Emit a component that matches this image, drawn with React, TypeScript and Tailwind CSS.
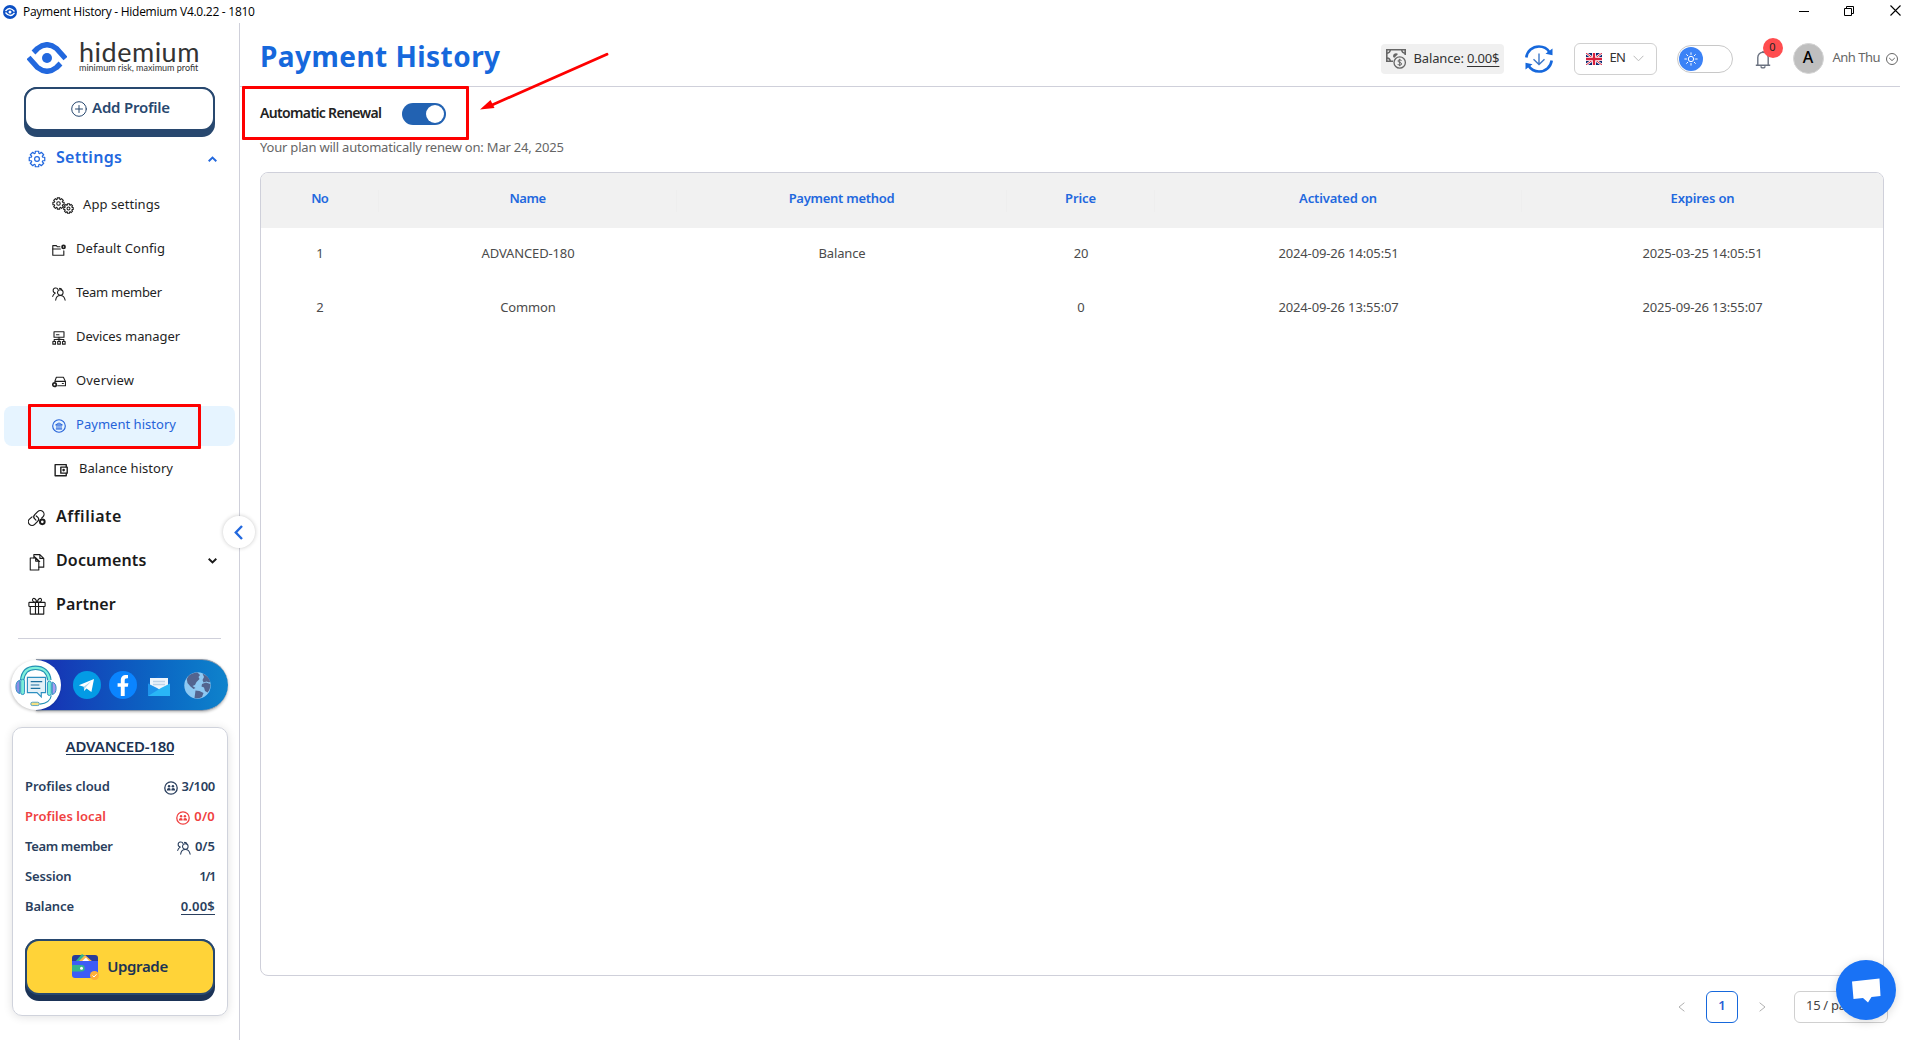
import type { ReactNode } from "react";

type IconProps = { className?: string };

function Svg({ className, box = 24, width = 1.5, children }: IconProps & { box?: number; width?: number; children: ReactNode }) {
  return (
    <svg className={className} viewBox={`0 0 ${box} ${box}`} fill="none" stroke="currentColor" strokeWidth={width} strokeLinecap="round" strokeLinejoin="round">
      {children}
    </svg>
  );
}

// Outline of an eight-toothed gear centred in a 24px box.
const gearTeeth = (() => {
  const pts: string[] = [];
  for (let i = 0; i < 8; i++) {
    const base = (i * Math.PI) / 4;
    for (const [off, r] of [[-0.3, 8], [-0.22, 10.6], [0.22, 10.6], [0.3, 8]] as const) {
      pts.push(`${(12 + r * Math.sin(base + off)).toFixed(2)},${(12 - r * Math.cos(base + off)).toFixed(2)}`);
    }
  }
  return pts.join(" ");
})();

function Gear({ className, width = 1.6 }: IconProps & { width?: number }) {
  return (
    <Svg className={className} width={width}>
      <polygon points={gearTeeth} />
      <circle cx="12" cy="12" r="3.2" />
    </Svg>
  );
}

function DoubleGear() {
  return (
    <span className="relative block h-[17px] w-[22px]">
      <Gear className="absolute left-0 top-0 size-[13px]" width={2} />
      <Gear className="absolute right-0 bottom-0 size-[11px]" width={2.3} />
    </span>
  );
}

function FolderCog({ className }: IconProps) {
  return (
    <Svg className={className} box={16} width={1.3}>
      <path d="M9 4.300H6.200L5 3H.9v11h12.600V9" />
      <path d="M.9 6.800h8.600" />
      <circle cx="13.200" cy="4.500" r="1.700" strokeWidth="2" />
    </Svg>
  );
}

function Team({ className }: IconProps) {
  return (
    <Svg className={className} box={16} width={1.2}>
      <circle cx="9.500" cy="6.300" r="3.200" />
      <path d="M4.200 15c.3-3 2.500-5.400 5.300-5.400s5 2.400 5.500 5.400M7 3.300A2.900 2.900 0 1 0 3.800 7M3.800 7C2.200 7.700 1.200 9 .8 10.800M8.500 1.600a3 3 0 0 1 3 2.200" />
    </Svg>
  );
}

function Devices({ className }: IconProps) {
  return (
    <Svg className={className} box={16} width={1.25}>
      <rect x="2.300" y=".8" width="11.400" height="6.400" />
      <path d="M5 4.200h3M8 7.200V12M2.500 11.500V9.800h11v1.700M5.500 9.500h5" />
      <rect x="1" y="12" width="3" height="3" />
      <rect x="6.500" y="12" width="3" height="3" />
      <rect x="12" y="12" width="3" height="3" />
    </Svg>
  );
}

function Overview({ className }: IconProps) {
  return (
    <Svg className={className} box={16} width={1.25}>
      <path d="M3.300 7 5 2.500h8L15.200 7M5.500 7.300h9.900v5H6.500M3.300 7.300h2.200" />
      <circle cx="2.900" cy="11" r="2" strokeWidth="1.900" />
      <path d="M11.800 9.800h1.200" />
    </Svg>
  );
}

function Bank({ className }: IconProps) {
  return (
    <Svg className={className} box={16} width={1.3}>
      <circle cx="8" cy="8" r="7.200" />
      <path d="M4.500 6.500 8 4.500l3.500 2zM4.800 11.500h6.400M5.700 7v4M8 7v4M10.300 7v4" strokeWidth="1.100" />
    </Svg>
  );
}

function Wallet({ className }: IconProps) {
  return (
    <Svg className={className} box={16} width={1.6}>
      <path d="M14 4.300V1.800H1.300v12.800H14v-2.800" />
      <rect x="7.800" y="4.700" width="7.300" height="6.900" />
      <circle cx="11" cy="8.100" r=".7" />
    </Svg>
  );
}

function Affiliate({ className }: IconProps) {
  return (
    <Svg className={className} box={20} width={1.35}>
      <path d="M8.800 12.300 7.500 11a3.400 3.400 0 0 1 0-4.800l3.300-3.300a4 4 0 0 1 5.800 5.800l-1.500 1.500" />
      <path d="M9.200 7.700 10.700 9a3.400 3.400 0 0 1 0 4.800l-3.300 3.300a4 4 0 0 1-5.800-5.800L4.500 8.700" />
      <circle cx="15.900" cy="14.300" r="2.600" strokeWidth="2.200" />
    </Svg>
  );
}

function Docs({ className }: IconProps) {
  return (
    <Svg className={className} box={20} width={1.2}>
      <path d="M2.500 5.500h6l3.500 3.500v9.800H2.500zM8.500 5.500V9H12" />
      <path d="M6.500 5.500V1.800h6.700L17.500 6v9.700H12M13.200 1.800V6h4.300M6.500 3.500 13 9.500" />
    </Svg>
  );
}

function Gift({ className }: IconProps) {
  return (
    <Svg className={className} box={20} width={1.25}>
      <rect x="1" y="6" width="18" height="4.500" rx=".6" />
      <path d="M2.500 10.500V19h15v-8.500M8.300 6v13M11.700 6v13" />
      <path d="M9.700 6C7 6 5 5.200 5 3.300 5 .5 9 .6 9.700 6ZM10.300 6C13 6 15 5.200 15 3.300 15 .5 11 .6 10.300 6Z" />
    </Svg>
  );
}

function Group({ className }: IconProps) {
  return (
    <Svg className={className} box={16} width={1.5}>
      <circle cx="8" cy="8" r="7.100" />
      <g fill="currentColor" stroke="none">
        <circle cx="5.800" cy="6" r="1.400" />
        <circle cx="10.200" cy="6" r="1.400" />
        <path d="M3.300 10.800c0-1.800 1-2.700 2.300-2.700s2 .9 2 2.700zM8.400 10.800c0-1.800.8-2.700 2-2.700s2.300.9 2.300 2.700z" />
      </g>
    </Svg>
  );
}

function HidemiumEye({ className }: IconProps) {
  return (
    <svg className={className} viewBox="0 0 40 32">
      <g fill="none" stroke="#2268de" strokeWidth="5.400" strokeLinejoin="round">
        <path d="M6.500 10.500 10.500 6.500Q20-1 29.500 6.500L38.500 16.500" />
        <path d="M33.500 21.500 29.500 25.500Q20 33 10.500 25.500L1.500 15.500" />
      </g>
      <circle cx="20" cy="16" r="5" fill="#2268de" />
    </svg>
  );
}

function TitleBar() {
  return (
    <div className="flex h-[23px] shrink-0 items-center pl-[3px]">
      <svg className="size-[14px]" viewBox="0 0 14 14">
        <circle cx="7" cy="7" r="7" fill="#0b4fc4" />
        <path d="M2.500 6Q7 .8 11.500 6.500M2.500 7.500Q7 13.200 11.500 8" fill="none" stroke="#fff" strokeWidth="1.300" />
        <circle cx="7" cy="7" r="1.500" fill="#fff" />
      </svg>
      <span className="ml-[6px] font-['Open_Sans',sans-serif] text-[12px] tracking-[-0.27px] text-black">Payment History - Hidemium V4.0.22 - 1810</span>
      <div className="ml-auto flex items-center pb-[2px] text-black">
        <svg className="mr-[35px] h-[10px] w-[10px]" viewBox="0 0 10 10"><path d="M0 5.500h10" stroke="currentColor" /></svg>
        <svg className="mr-[36px] h-[10px] w-[10px]" viewBox="0 0 10 10" fill="none" stroke="currentColor"><path d="M.5 2.500h7v7h-7zM2.500 2.500v-2h7v7h-2" /></svg>
        <svg className="mr-[18px] h-[11px] w-[11px]" viewBox="0 0 11 11"><path d="m.5.5 10 10m0-10-10 10" stroke="currentColor" strokeWidth="1.100" /></svg>
      </div>
    </div>
  );
}

type SubItem = { label: string; icon: ReactNode; track: string; pad?: string; gap?: string; active?: boolean };

const subItems: SubItem[] = [
  { label: "App settings", icon: <DoubleGear />, track: "tracking-[0.07px]", gap: "gap-[9px]" },
  { label: "Default Config", icon: <FolderCog className="size-[14px]" />, track: "tracking-[0.08px]" },
  { label: "Team member", icon: <Team className="size-[14px]" />, track: "tracking-[-0.28px]" },
  { label: "Devices manager", icon: <Devices className="size-[14px]" />, track: "tracking-[-0.08px]" },
  { label: "Overview", icon: <Overview className="size-[14px]" />, track: "tracking-[0.18px]" },
  { label: "Payment history", icon: <Bank className="size-[14px]" />, track: "tracking-[0.03px]", active: true },
  { label: "Balance history", icon: <Wallet className="size-[14px]" />, track: "tracking-[0.03px]", pad: "pl-[50px]", gap: "gap-[11px]" },
];

function SubRow({ item }: { item: SubItem }) {
  return (
    <div className="flex h-11 items-center px-1 pt-px">
      <div className={`relative flex h-10 flex-1 items-center rounded-lg ${item.pad ?? "pl-[48px]"} ${item.gap ?? "gap-[10px]"} ${item.active ? "bg-[#e6f4ff] text-[#2563d9]" : "text-[#1f1f1f]"}`}>
        <span>{item.icon}</span>
        <span className={`-mt-[2px] text-[13px] whitespace-nowrap ${item.track}`}>{item.label}</span>
        {item.active && <span className="absolute -top-[2px] left-[24px] h-[45px] w-[173px] rounded-[1px] border-[3px] border-[#fe0000]" />}
      </div>
    </div>
  );
}

function MainRow({ icon, label, track, arrow }: { icon: ReactNode; label: string; track: string; arrow?: boolean }) {
  return (
    <div className="flex h-11 items-center pl-[28px] text-[#1a1a1a]">
      <span className="mt-[2px]">{icon}</span>
      <span className={`-mt-[2px] ml-[10px] text-[16px] font-semibold ${track}`}>{label}</span>
      {arrow && (
        <svg className="ml-auto mr-[22px] h-[6px] w-[9px]" viewBox="0 0 9 6"><path d="m.7.8 3.800 3.700L8.300.8" fill="none" stroke="currentColor" strokeWidth="1.900" /></svg>
      )}
    </div>
  );
}

function SocialPill() {
  return (
    <div className="mt-[20px] ml-[36px] flex h-[52px] w-[192px] items-center rounded-r-full border-y border-[#8f9aa9] bg-gradient-to-r from-[#1637b5] from-10% to-[#0f83cc] shadow-[0_1px_3px_rgba(0,0,0,0.3)]">
      <div className="-ml-[25px] flex size-[50px] shrink-0 items-center justify-center rounded-full bg-white shadow-[-1px_1px_3px_rgba(0,0,0,0.2)]">
        <svg className="size-[44px]" viewBox="0 0 46 46" fill="none">
          <path d="M8.500 18C9.500 9 15 5 22.500 5S36 9 37 18" stroke="#2392b5" strokeWidth="4.600" />
          <path d="M8.500 18C9.500 9 15 5 22.500 5S36 9 37 18" stroke="#7ff0dc" strokeWidth="2.400" />
          <path d="M6 18q-4 1-4 7t4 7z" fill="#8b8fe6" stroke="#2d8fc0" />
          <rect x="7" y="17" width="4" height="16" rx="2" fill="#79ecd8" stroke="#2d8fc0" />
          <path d="M40 20q4 1 4 6.500T40 33z" fill="#a99bf0" stroke="#2d8fc0" />
          <rect x="35" y="19" width="4" height="15" rx="2" fill="#79ecd8" stroke="#2d8fc0" />
          <path d="M14 15h19v16h-4.500v4.500L24 31H14z" fill="#e4f1f8" stroke="#2d8fc0" strokeWidth="1.200" />
          <path d="M17.500 19.500h12M17.500 23h9M17.500 26.500h10" stroke="#1c6f9f" strokeWidth="1.200" />
          <path d="M39 34c-1 6-6 8.500-12 9" stroke="#2392b5" strokeWidth="1.200" />
          <rect x="17.500" y="41" width="9" height="3.500" rx="1.700" fill="#f4e083" stroke="#2d8fc0" strokeWidth=".8" />
        </svg>
      </div>
      <svg className="ml-[12px] size-[28px] shrink-0" viewBox="0 0 28 28">
        <circle cx="14" cy="14" r="14" fill="#039be5" />
        <path d="M5.800 14.200 21 8l-2.600 13-4.900-3.500-2.400 2.400-.3-4.100z" fill="#fff" />
        <path d="m11.200 19.200-.2-3.700L18.500 10l-6 6.500z" fill="#b0d8ef" />
      </svg>
      <svg className="ml-[8px] size-[28px] shrink-0" viewBox="0 0 28 28">
        <circle cx="14" cy="14" r="14" fill="#0a84ff" />
        <path d="M11.800 25v-9.200H8.600v-3.600h3.200V9.500c0-4 2-6 7.200-5.500v3.300c-2.500-.2-3.300.4-3.300 2.500v2.400h3.700l-.6 3.600h-3.100V25z" fill="#fff" />
      </svg>
      <svg className="ml-[11px] h-[21px] w-[22px] shrink-0" viewBox="0 0 22 21">
        <path d="M0 8 11 0l11 8v13H0z" fill="#1169c9" />
        <path d="M2 3h18v12H2z" fill="#eef5fc" />
        <path d="M5 6.500h12M5 9.500h12" stroke="#bdd3e8" strokeWidth="1.500" />
        <path d="M0 8.500 9 13l13 8H0z" fill="#1e94ec" />
        <path d="M22 8.500 13 13 0 21h22z" fill="#29b6f6" />
      </svg>
      <svg className="ml-[14px] size-[27px] shrink-0" viewBox="0 0 27 27">
        <circle cx="13.500" cy="13.500" r="13.200" fill="#8ec9f3" />
        <g fill="#53648f">
          <path d="M4.500 4C7 1.500 11 .3 13.500.5L16 3l-1.500 2 1 2-3 3-1.500 3-2.500 1 3 2-2 1-3-2.500-3-3.500L2.800 7z" />
          <path d="M18.500 1.500q6 2.500 7.700 8l-1 1-2.700-1-3 1-1-2.500 1.500-3zM18 12l4-1.500 4.300 1.500q.3 5-2.800 8.500L21 19l-1-3.500-2.500-1zM11.500 18.500l4 .5 4 2-1.500 4q-3.500 2-7.500 1z" />
        </g>
      </svg>
    </div>
  );
}

function PlanRow({ label, value, track, vtrack, icon, tone, underline }: { label: string; value: string; track: string; vtrack: string; icon?: ReactNode; tone?: string; underline?: boolean }) {
  return (
    <div className={`flex h-[30px] items-center text-[13px] font-semibold ${tone ?? "text-[#2a3f5e]"}`}>
      <span className={track}>{label}</span>
      <span className="ml-auto flex items-center gap-[4px]">
        {icon && <span className="mt-[2px]">{icon}</span>}
        <span className={`${vtrack} ${underline ? "border-b border-current leading-[15px]" : ""}`}>{value}</span>
      </span>
    </div>
  );
}

function UpgradeWallet() {
  return (
    <svg className="h-[26px] w-[28px]" viewBox="0 0 28 26">
      <rect y="1" width="26" height="14" rx="3" fill="#283c9a" />
      <path d="M3 8 10 0l3 2-7 7z" fill="#35b58c" />
      <path d="m6 8 7-7 8 7z" fill="#ffb74a" />
      <path d="m9 8 5-4.500L18 8z" fill="#fff" />
      <path d="M0 7h26v14a3 3 0 0 1-3 3H3a3 3 0 0 1-3-3z" fill="#3d5cf5" />
      <path d="M0 11h9.500a3.200 3.200 0 0 1 0 6.400H0z" fill="#35b58c" />
      <circle cx="9.500" cy="14.200" r="1.500" fill="#fff" />
      <circle cx="22.500" cy="21.500" r="4.500" fill="#ffb03a" />
      <path d="m20.500 21.500 1.500 1.500 2.500-2.700" fill="none" stroke="#fff" />
    </svg>
  );
}

function PlanCard() {
  return (
    <div className="mt-[16px] ml-[12px] flex h-[289px] w-[216px] flex-col rounded-[10px] border border-[#d0d3dc] px-[12px] shadow-[0_1px_10px_rgba(0,0,0,0.12)]">
      <div className="mt-[10px] self-center border-b-[1.5px] border-[#1c3353] text-[15px] leading-[16px] font-semibold tracking-[-0.2px] text-[#1c3353]">ADVANCED-180</div>
      <div className="mt-[17px]">
        <PlanRow label="Profiles cloud" value="3/100" track="tracking-[-0.05px]" vtrack="tracking-[-0.3px]" icon={<Group className="size-[14px]" />} />
        <PlanRow label="Profiles local" value="0/0" track="tracking-[0.04px]" vtrack="tracking-[0.2px]" icon={<Group className="size-[14px]" />} tone="text-[#f04141]" />
        <PlanRow label="Team member" value="0/5" track="tracking-[-0.35px]" vtrack="tracking-[0px]" icon={<Team className="size-[14px]" />} />
        <PlanRow label="Session" value="1/1" track="tracking-[-0.15px]" vtrack="tracking-[-1.4px]" />
        <PlanRow label="Balance" value="0.00$" track="tracking-[-0.15px]" vtrack="tracking-[0.2px]" underline />
      </div>
      <button className="mt-[17px] flex h-[62px] shrink-0 items-start rounded-[14px] bg-[#1b3357]">
        <span className="flex h-[56px] w-full items-center justify-center gap-[7px] rounded-[14px] border-2 border-[#27486f] bg-[#ffd338] text-[15px] font-semibold tracking-[-0.36px] text-[#1c3353]">
          <UpgradeWallet />
          <span className="-mt-[2px]">Upgrade</span>
        </span>
      </button>
    </div>
  );
}

function Sidebar() {
  return (
    <aside className="relative flex w-[240px] shrink-0 flex-col border-r border-[#cfd0da]">
      <div className="mt-[17px] ml-[27px] flex h-[36px] items-start">
        <HidemiumEye className="mt-[2px] h-[32px] w-[40px]" />
        <div className="ml-[12px] font-['Lato',sans-serif] text-[#333]">
          <div className="text-[27px] leading-[23px] tracking-[0.5px]">hidemium</div>
          <div className="text-[9px] leading-[9px] whitespace-nowrap tracking-[0px]">minimum risk, maximum profit</div>
        </div>
      </div>
      <button className="mt-[11px] ml-[24px] flex h-[50px] w-[191px] shrink-0 items-start rounded-[13px] bg-[#28486f]">
        <span className="flex h-[44px] w-full items-center justify-center gap-[5px] rounded-[13px] border-2 border-[#28486f] bg-white pl-[2px] text-[15px] font-semibold tracking-[-0.23px] text-[#28486f]">
          <Svg className="size-4" box={16} width={1}>
            <circle cx="8" cy="8" r="7.300" />
            <path d="M8 4.500v7M4.500 8h7" />
          </Svg>
          <span className="-mt-[3px]">Add Profile</span>
        </span>
      </button>
      <div className="flex h-[40px] items-center pl-[28px] text-[#2268de]">
        <Gear className="mt-[3px] size-[18px]" />
        <span className="-mt-px ml-[10px] text-[16px] font-semibold tracking-[0.3px]">Settings</span>
        <svg className="ml-auto mr-[22px] mt-[3px] h-[6px] w-[9px]" viewBox="0 0 9 6"><path d="M.7 5.200 4.500 1.500l3.800 3.700" fill="none" stroke="currentColor" strokeWidth="1.900" /></svg>
      </div>
      <nav className="mt-[6px]">
        {subItems.map((item) => <SubRow key={item.label} item={item} />)}
      </nav>
      <nav className="mt-[4px]">
        <MainRow icon={<Affiliate className="size-[18px]" />} label="Affiliate" track="tracking-[0.5px]" />
        <MainRow icon={<Docs className="size-[18px]" />} label="Documents" track="tracking-[0.15px]" arrow />
        <MainRow icon={<Gift className="size-[18px]" />} label="Partner" track="tracking-[0.1px]" />
      </nav>
      <div className="mt-[11px] ml-[18px] h-px w-[203px] shrink-0 bg-[#cfd0da]" />
      <SocialPill />
      <PlanCard />
      <button className="absolute top-[493px] -right-[16px] flex size-[32px] items-center justify-center rounded-full bg-white shadow-[0_0_4px_rgba(0,0,0,0.22)]">
        <svg className="-ml-px h-[15px] w-[9px]" viewBox="0 0 9 15"><path d="M8 1 1.800 7.500 8 14" fill="none" stroke="#2268de" strokeWidth="2.400" /></svg>
      </button>
    </aside>
  );
}

function Flag() {
  return (
    <svg className="h-[12px] w-[16px]" viewBox="0 0 16 12">
      <path fill="#0a2a73" d="M0 0h16v12H0z" />
      <path d="m0 0 16 12M16 0 0 12" stroke="#fff" strokeWidth="2.400" />
      <path d="m0 0 16 12M16 0 0 12" stroke="#d8203c" strokeWidth="1" />
      <path d="M8 0v12M0 6h16" stroke="#fff" strokeWidth="4" />
      <path d="M8 0v12M0 6h16" stroke="#d8203c" strokeWidth="2.300" />
    </svg>
  );
}

function Header() {
  return (
    <header className="mr-[19px] flex h-[64px] items-center border-b border-[#cfd0da] pl-[20px]">
      <h1 className="mt-[3px] text-[28px] leading-none font-bold tracking-[0.45px] whitespace-nowrap text-[#1668dc]">Payment History</h1>
      <div className="mt-[8px] ml-auto flex items-center whitespace-nowrap text-[#333]">
        <div className="flex h-[30px] w-[123px] items-center rounded-[4px] bg-[#f0f0f0] pl-[5px]">
          <svg className="h-[20px] w-[21px] text-[#666]" viewBox="0 0 21 20" fill="none" stroke="currentColor">
            <path d="M7 12.300H.8V.8h18.400V6" strokeWidth="1.600" />
            <path d="M1 4.200Q4 4 4.300 1M15.700 1Q16 4 19 4.200M1 9q3 .2 3.300 3" strokeWidth="1.500" />
            <path d="M7 7.200a3 3 0 0 1 5-2.200L8.500 8.800Q7 8.500 7 7.200Z" fill="currentColor" stroke="none" />
            <circle cx="13.700" cy="13.500" r="5.700" strokeWidth="1.300" />
            <path d="M15.500 11.800q-.5-1-1.800-1-1.700 0-1.700 1.200 0 1 1.700 1.400 1.900.4 1.900 1.500 0 1.300-1.900 1.300-1.500 0-2-1.200M13.700 9.800v7.400" strokeWidth="1" />
          </svg>
          <span className="-mt-[2px] ml-[7px] text-[13px] leading-[16px] tracking-[-0.16px]">Balance: <span className="underline underline-offset-[3px]">0.00$</span></span>
        </div>
        <svg className="ml-[21px] size-[28px]" viewBox="0 0 28 28" fill="none">
          <path d="M1.300 12.500C2.200 6 7.500 1.500 14 1.500c4.500 0 8.300 2.200 10.500 5.700M26.700 15.500C25.800 22 20.500 26.500 14 26.500c-4.500 0-8.300-2.200-10.500-5.700" stroke="#1668dc" strokeWidth="2.600" />
          <path d="M27.500 3.500v6.800l-7-1.600zM.5 24.500v-6.800l7 1.600z" fill="#1668dc" />
          <path d="M14 8.500v11M8.500 14.300l5.500 5.300 5.500-5.300" stroke="#3d78c8" strokeWidth="1.400" />
        </svg>
        <div className="ml-[21px] flex h-[32px] w-[83px] items-center rounded-[6px] border border-[#d0d0d0] pl-[11px]">
          <Flag />
          <span className="-mt-[2px] ml-[8px] text-[13px] tracking-[-0.8px]">EN</span>
          <svg className="ml-[8px] h-[7px] w-[11px]" viewBox="0 0 11 7"><path d="m.6.8 4.900 5 4.900-5" fill="none" stroke="#bbb" /></svg>
        </div>
        <div className="ml-[20px] flex h-[28px] w-[56px] items-center rounded-full border border-[#c8c8c8] pl-px">
          <span className="flex size-[24px] items-center justify-center rounded-full bg-[#3b82f6] text-white">
            <Svg className="size-[14px]" box={14} width={1}>
              <circle cx="7" cy="7" r="2.700" />
              <path d="M7 .8v1.700M7 11.500v1.700M.8 7h1.700M11.500 7h1.700M2.600 2.600l1.200 1.200M10.200 10.200l1.200 1.200M2.600 11.400l1.200-1.200M10.200 3.800l1.200-1.200" />
            </Svg>
          </span>
        </div>
        <div className="relative ml-[22px]">
          <svg className="h-[20px] w-[16px]" viewBox="0 0 16 20" fill="none" stroke="#6b7280" strokeWidth="1.400">
            <path d="M.8 16.300h14.400M2.800 16V8.500a5.200 5.200 0 0 1 10.400 0V16" />
            <path d="M6 17.200a2 1.700 0 0 0 4 0M8 3.300V2" />
          </svg>
          <span className="absolute -top-[11px] left-[8px] flex size-[20px] items-center justify-center rounded-full bg-[#ff4d4f] text-[11px] text-[#222]">0</span>
        </div>
        <span className="ml-[22px] flex size-[31px] items-center justify-center rounded-full border border-[#d5d5d5] bg-[#bfbfbf] pb-[3px] text-[16px] font-medium text-black">A</span>
        <span className="-mt-[2px] ml-[9px] text-[13px] tracking-[-0.51px] text-[#666]">Anh Thu</span>
        <svg className="ml-[6px] mr-[2px] size-[12px]" viewBox="0 0 12 12" fill="none" stroke="#666"><circle cx="6" cy="6" r="5.500" /><path d="m3.200 5 2.800 2.600L8.800 5" /></svg>
      </div>
    </header>
  );
}

type Col = { title: string; track: string };
const columns: Col[] = [
  { title: "No", track: "tracking-[-0.8px]" },
  { title: "Name", track: "tracking-[-0.5px]" },
  { title: "Payment method", track: "tracking-[-0.28px]" },
  { title: "Price", track: "tracking-[-0.11px]" },
  { title: "Activated on", track: "tracking-[-0.15px]" },
  { title: "Expires on", track: "tracking-[-0.16px]" },
];

const rows = [
  ["1", "ADVANCED-180", "Balance", "20", "2024-09-26 14:05:51", "2025-03-25 14:05:51"],
  ["2", "Common", "", "0", "2024-09-26 13:55:07", "2025-09-26 13:55:07"],
];

const grid = "grid grid-cols-[118px_298px_330px_148px_367px_361px] text-center text-[13px]";

function PaymentTable() {
  return (
    <div className="mt-[16px] ml-[20px] h-[804px] w-[1624px] shrink-0 overflow-hidden rounded-[8px] border border-[#cfd0da]">
      <div className={`${grid} h-[55px] items-center bg-[#f1f1f1] font-semibold text-[#2268de]`}>
        {columns.map((c, i) => (
          <div key={c.title} className={`flex h-[22px] items-center justify-center ${i < 5 ? "border-r border-[#eeeeee]" : ""}`}>
            <span className={`-mt-[3px] ${c.track}`}>{c.title}</span>
          </div>
        ))}
      </div>
      {rows.map((row) => (
        <div key={row[0]} className={`${grid} h-[54px] items-center pb-[2px] tracking-[-0.14px] text-[#4b4b4b]`}>
          {row.map((cell, i) => <div key={i}>{cell}</div>)}
        </div>
      ))}
    </div>
  );
}

function Pagination() {
  return (
    <div className="mt-[15px] mr-[31px] flex items-center justify-end text-[13px] text-[#444]">
      <svg className="h-[10px] w-[7px]" viewBox="0 0 7 10"><path d="M6.400.7 1 5l5.400 4.300" fill="none" stroke="#b0b0b0" /></svg>
      <div className="ml-[21px] flex size-[32px] items-center justify-center rounded-[6px] border border-[#1668dc] pb-[2px] font-semibold text-[#2a5fd6]">1</div>
      <svg className="ml-[21px] h-[10px] w-[7px]" viewBox="0 0 7 10"><path d="M.6.7 6 5 .6 9.300" fill="none" stroke="#b0b0b0" /></svg>
      <div className="ml-[28px] flex h-[32px] w-[94px] items-center rounded-[6px] border border-[#d0d0d0] pb-[2px] pl-[11px] tracking-[-0.3px]">15 / page</div>
    </div>
  );
}

export default function App() {
  return (
    <div className="relative flex h-[1040px] w-[1919px] flex-col overflow-hidden bg-white font-['Noto_Sans',sans-serif]">
      <TitleBar />
      <div className="flex min-h-0 flex-1">
        <Sidebar />
        <main className="flex min-w-0 flex-1 flex-col">
          <Header />
          <div className="relative flex h-[52px] items-center pl-[20px]">
            <span className="-mt-[2px] w-[122px] text-[14px] font-semibold tracking-[-0.65px] whitespace-nowrap text-[#222]">Automatic Renewal</span>
            <span className="mt-[2px] ml-[20px] flex h-[22px] w-[44px] items-center justify-end rounded-full bg-[#2262b2] pr-[2px]">
              <span className="size-[18px] rounded-full bg-white" />
            </span>
            <span className="absolute -top-px left-[2px] h-[54px] w-[227px] rounded-[1px] border-[3px] border-[#fe0000]" />
            <svg className="absolute -top-[35px] left-[238px] h-[60px] w-[134px]" viewBox="0 0 134 60">
              <path d="M129 2.300 14 53" stroke="#fe0000" strokeWidth="2.800" strokeLinecap="round" />
              <path d="M2 57.500 12.500 48l4 8z" fill="#fe0000" />
            </svg>
          </div>
          <p className="-mt-px pl-[20px] text-[13px] leading-[18px] tracking-[-0.2px] text-[#666]">Your plan will automatically renew on: Mar 24, 2025</p>
          <PaymentTable />
          <Pagination />
        </main>
      </div>
      <button className="absolute right-[23px] bottom-[20px] flex size-[60px] items-center justify-center rounded-full bg-[#1972f5] shadow-[0_2px_10px_rgba(0,0,0,0.15)]">
        <svg className="-ml-px h-[25px] w-[30px]" viewBox="0 0 30 25"><path d="M1 3.500 28.500.5 29.500 18 20.500 19 17 24.500 12 20 2.500 21z" fill="#fff" /></svg>
      </button>
    </div>
  );
}
